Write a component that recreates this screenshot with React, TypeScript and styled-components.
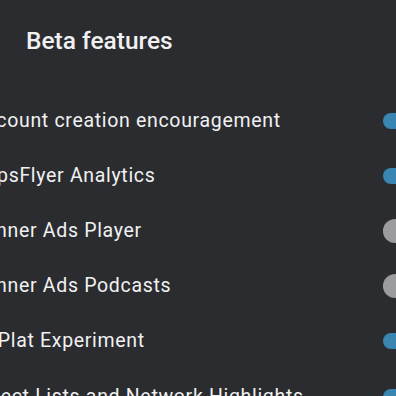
import React from "react";
import styled, { createGlobalStyle } from "styled-components";

const Global = createGlobalStyle`
  html, body { margin: 0; padding: 0; background: #2b2c30; }
  body { font-family: Roboto, "Noto Sans", sans-serif; -webkit-font-smoothing: antialiased; }
`;

const Screen = styled.div`
  width: 396px;
  height: 396px;
  overflow: hidden;
  background: #2b2c30;
  color: #f1f1f2;
  display: flex;
  flex-direction: column;
`;

const Title = styled.h1`
  margin: 0;
  padding: 27px 0 0 26px;
  height: 58px;
  box-sizing: border-box;
  font-size: 24.5px;
  font-weight: 500;
  line-height: 28px;
  letter-spacing: 0;
`;

const List = styled.div`
  display: flex;
  flex-direction: column;
  margin-left: -28px;
  margin-top: 38px;
`;

const Row = styled.div`
  height: 55.2px;
  display: flex;
  align-items: center;
  justify-content: space-between;
  flex-shrink: 0;
`;

const Label = styled.span`
  font-size: 19.5px;
  line-height: 24px;
  letter-spacing: 0.68px;
  white-space: nowrap;
`;

const SwitchWrap = styled.div`
  position: relative;
  width: 34px;
  height: 24px;
  margin-right: -21px;
  flex-shrink: 0;
`;

const Track = styled.div<{ $on: boolean }>`
  position: absolute;
  left: 0;
  top: 4px;
  width: 34px;
  height: 16px;
  border-radius: 8px;
  background: ${(p) => (p.$on ? "#3a86b3" : "#6b6c70")};
`;

const Thumb = styled.div`
  position: absolute;
  top: 0;
  left: 0;
  width: 24px;
  height: 24px;
  border-radius: 50%;
  background: #9c9c9e;
`;

const Switch = ({ on }: { on: boolean }) => (
  <SwitchWrap>
    <Track $on={on} />
    {!on && <Thumb />}
  </SwitchWrap>
);

const items = [
  { label: "Account creation encouragement", on: true },
  { label: "AppsFlyer Analytics", on: true },
  { label: "Banner Ads Player", on: false },
  { label: "Banner Ads Podcasts", on: false },
  { label: "GoPlat Experiment", on: true },
  { label: "Select Lists and Network Highlights", on: true },
];

export default function App() {
  return (
    <>
      <Global />
      <Screen>
        <Title>Beta features</Title>
        <List>
          {items.map((it) => (
            <Row key={it.label}>
              <Label>{it.label}</Label>
              <Switch on={it.on} />
            </Row>
          ))}
        </List>
      </Screen>
    </>
  );
}
